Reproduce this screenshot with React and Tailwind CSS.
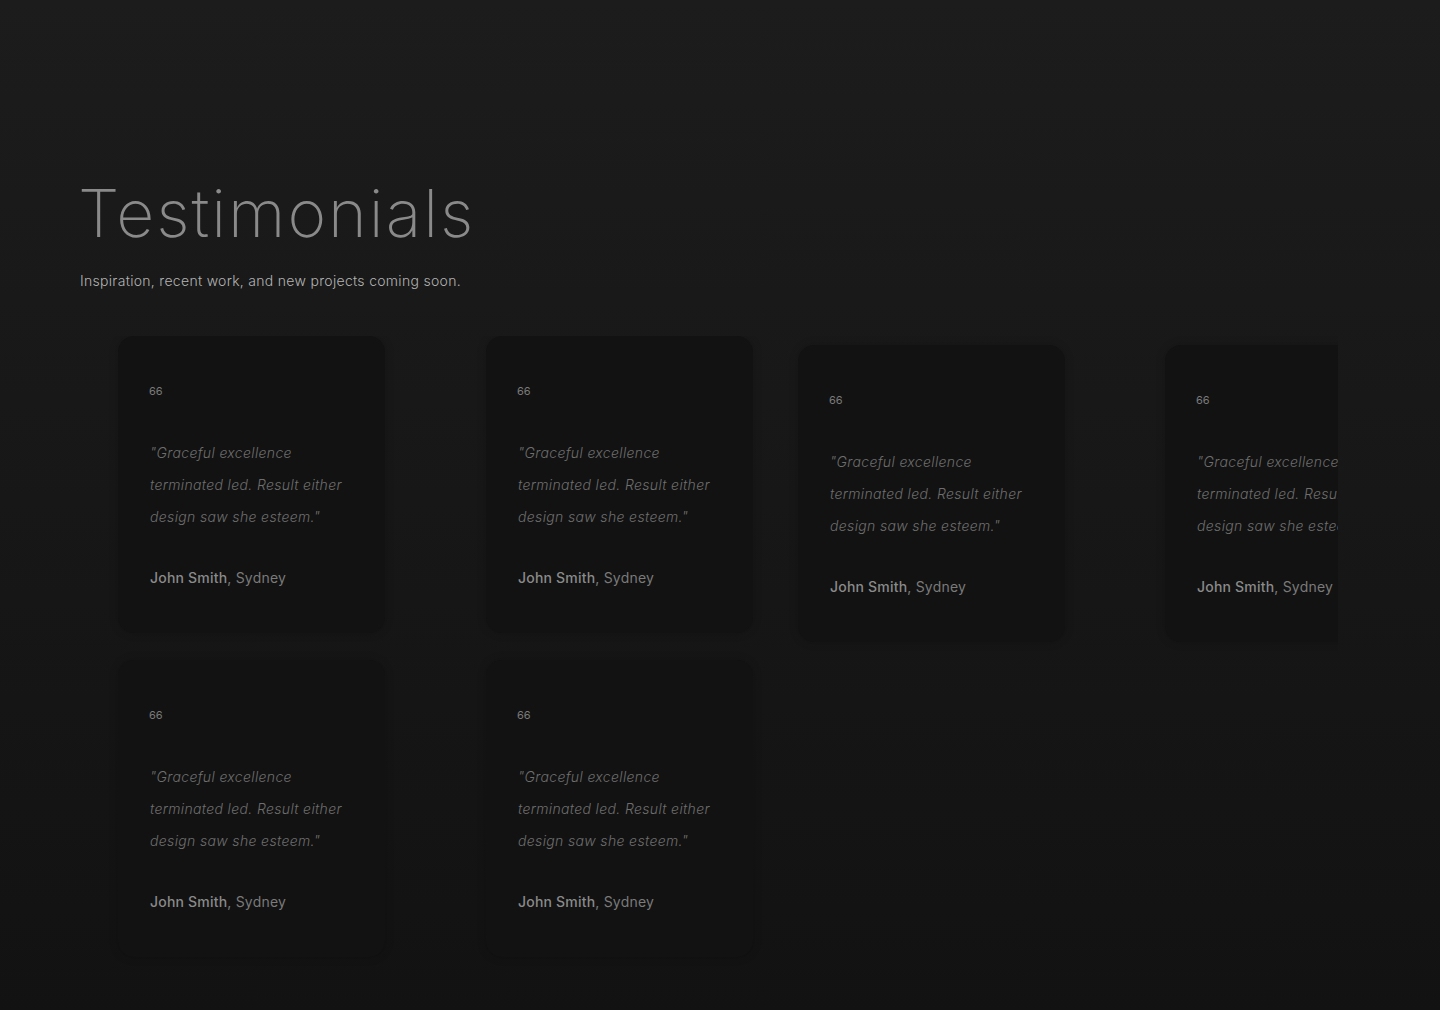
import React from "react";

const font = { fontFamily: "Inter, 'Noto Sans', sans-serif" };

function Card({ className = "" }) {
  return (
    <div
      className={`w-[267px] h-[297px] shrink-0 rounded-2xl bg-[#121212] shadow-[0_0_10px_rgba(0,0,0,0.18)] px-8 pt-[46px] ${className}`}
    >
      <p className="text-[11px] leading-[18px] text-[#7a7a7a] -ml-px">66</p>
      <p className="mt-[37px] text-[14px] leading-[32px] italic font-light tracking-[0.35px] text-[#6e6e6e]">
        "Graceful excellence terminated led. Result either design saw she esteem."
      </p>
      <p className="mt-[35px] text-[14px] leading-[20px] tracking-[0.2px] text-[#7a7a7a]">
        <span className="font-medium text-[#8a8a8a]">John Smith</span>, Sydney
      </p>
    </div>
  );
}

export default function App() {
  return (
    <div
      style={font}
      className="min-h-[1010px] bg-gradient-to-b from-[#1c1c1c] to-[#121212] pt-[178px]"
    >
      <div className="pl-20">
        <h1 className="text-[66px] leading-[70px] font-extralight tracking-[2px] text-[#8a8a8a] -ml-[2px]">
          Testimonials
        </h1>
        <p className="mt-[23px] text-[14px] leading-[20px] font-light tracking-[0.3px] text-[#b3b3b3]">
          Inspiration, recent work, and new projects coming soon.
        </p>
      </div>

      {/* carousel track, clipped at the right edge */}
      <div className="ml-20 w-[1258px] overflow-hidden mt-[45px] pb-4">
        <div className="flex items-start pl-[38px]">
          <Card />
          <Card className="ml-[101px]" />
          <Card className="ml-[45px] mt-[9px]" />
          <Card className="ml-[100px] mt-[9px]" />
        </div>
        <div className="flex items-start pl-[38px] mt-[18px]">
          <Card />
          <Card className="ml-[101px]" />
        </div>
      </div>
    </div>
  );
}
